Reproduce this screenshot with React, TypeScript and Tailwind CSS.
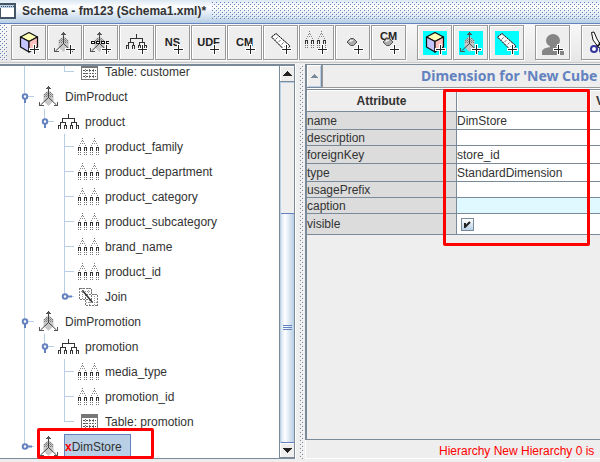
import React from "react";

type Guide = "none" | "line" | "tee" | "end" | "open" | "openLast" | "closed" | "closedLast";
type IconName = "table" | "dim" | "tree" | "level" | "join";

function DimShape() {
  return (
    <g>
      <path d="M10.5 5l5 4.5v6.5l-5 5-5-5v-6.5z" fill="#c8c8c8" />
      <path d="M8 7.5h6M6 9.5h9M6 11.5h9" stroke="#777" strokeDasharray="1 1" />
      <path d="M7 8.5h7M7 10.5h8" stroke="#999" strokeDasharray="1 1" />
      <path d="M10.5 1v12M10.5 12.5l-8 7.5M10.5 12.5l8 7.5" stroke="#444" fill="none" />
      <path d="M8 3.5h5M9 2.5h3M1.5 17v3.5h4M15.5 20.5h4v-3.5" stroke="#555" fill="none" shapeRendering="crispEdges" />
    </g>
  );
}

function TreeShape() {
  return (
    <g stroke="#333" fill="none" shapeRendering="crispEdges">
      <path d="M10.5 0v4.5M4.5 9v-4.5h12v4.5M2 8.5h6M13 8.5h6" />
      <path d="M2.5 8v3M7.5 8v3M13.5 8v3M18.5 8v3" />
      <path d="M0.5 15v-3.5h2v3.5M6.5 15v-3.5h2v3.5M12.5 15v-3.5h2v3.5M18.5 15v-3.5h2v3.5" />
    </g>
  );
}

function LevelShape() {
  return (
    <g fill="none" shapeRendering="crispEdges">
      <path d="M4.5 0v3M16.5 0v3" stroke="#777" strokeDasharray="1 1" />
      <path d="M3.5 3v1M5.5 3v1M15.5 3v1M17.5 3v1M2.5 5v1M6.5 5v1M14.5 5v1M18.5 5v1M1.5 7v1M7.5 7v1M13.5 7v1M19.5 7v1M4.5 5v1M16.5 5v1" stroke="#888" />
      <path d="M0.5 13v-3.5h2v3.5M6.5 13v-3.5h2v3.5M12.5 13v-3.5h2v3.5M18.5 13v-3.5h2v3.5" stroke="#333" />
      <path d="M0.5 14v3M2.5 14v3M6.5 14v3M8.5 14v3M12.5 14v3M14.5 14v3M18.5 14v3M20.5 14v3" stroke="#777" strokeDasharray="1 1" />
    </g>
  );
}

function TreeIcon({ name }: { name: IconName }) {
  if (name === "dim")
    return (
      <svg width="22" height="23" viewBox="0 0 22 23" className="ml-1"><DimShape /></svg>
    );
  if (name === "tree")
    return (
      <svg width="22" height="16" viewBox="0 0 22 16" className="ml-1"><TreeShape /></svg>
    );
  if (name === "level")
    return (
      <svg width="22" height="17" viewBox="0 0 22 17" className="ml-1"><LevelShape /></svg>
    );
  if (name === "table")
    return (
      <svg width="17" height="16" viewBox="0 0 17 16" className="ml-[7px]" shapeRendering="crispEdges">
        <path d="M0.5 0.5h16v15h-16z" fill="#fff" stroke="#777" />
        <path d="M0 0h17v4h-17z" fill="#777" />
        <path d="M2 6.5h13M2 9.5h13M2 12.5h13" stroke="#555" strokeDasharray="2 1" />
        <path d="M4.5 5v10M8.5 5v10M12.5 5v10" stroke="#888" strokeDasharray="1 1" />
      </svg>
    );
  return (
    <svg width="19" height="18" viewBox="0 0 19 18" className="ml-[5px]" shapeRendering="crispEdges" fill="none">
      <path d="M0.5 0.5h12v11h-12zM6.5 6.5h12v11h-12z" stroke="#777" strokeDasharray="2 1" />
      <path d="M0 3.5h13M3.5 0v12M9.5 0v6M7 14.5h12M15.5 6v12M10.5 12v6" stroke="#999" strokeDasharray="1 1" />
      <path d="M3.5 2.5l10 12" stroke="#333" strokeWidth="1.5" shapeRendering="auto" />
    </svg>
  );
}

function GuideCell({ kind }: { kind: Guide }) {
  const open = kind === "open" || kind === "openLast";
  const closed = kind === "closed" || kind === "closedLast";
  const through = kind === "line" || kind === "tee" || kind === "open" || kind === "closed";
  const half = kind === "end" || kind === "openLast" || kind === "closedLast";
  return (
    <svg width="20" height="25" viewBox="0 0 20 25" className="shrink-0">
      <g stroke="#b8cfe5" shapeRendering="crispEdges">
        {through && <path d="M10.5 0v25" />}
        {half && <path d="M10.5 0v13" />}
        {kind !== "line" && kind !== "none" && <path d="M10 12.5h10" />}
      </g>
      {open && <path d="M11 13v6" stroke="#6382bf" strokeWidth="2" />}
      {closed && <path d="M12 12.5h6" stroke="#6382bf" strokeWidth="2" />}
      {(open || closed) && <circle cx="11" cy="12.5" r="2.25" fill="#fff" stroke="#6382bf" strokeWidth="2" />}
    </svg>
  );
}

const rows: { guides: Guide[]; icon: IconName; label: string }[] = [
  { guides: ["line", "none", "end"], icon: "table", label: "Table: customer" },
  { guides: ["open"], icon: "dim", label: "DimProduct" },
  { guides: ["line", "openLast"], icon: "tree", label: "product" },
  { guides: ["line", "none", "tee"], icon: "level", label: "product_family" },
  { guides: ["line", "none", "tee"], icon: "level", label: "product_department" },
  { guides: ["line", "none", "tee"], icon: "level", label: "product_category" },
  { guides: ["line", "none", "tee"], icon: "level", label: "product_subcategory" },
  { guides: ["line", "none", "tee"], icon: "level", label: "brand_name" },
  { guides: ["line", "none", "tee"], icon: "level", label: "product_id" },
  { guides: ["line", "none", "closedLast"], icon: "join", label: "Join" },
  { guides: ["open"], icon: "dim", label: "DimPromotion" },
  { guides: ["line", "openLast"], icon: "tree", label: "promotion" },
  { guides: ["line", "none", "tee"], icon: "level", label: "media_type" },
  { guides: ["line", "none", "tee"], icon: "level", label: "promotion_id" },
  { guides: ["line", "none", "end"], icon: "table", label: "Table: promotion" },
];

function Plus() {
  return (
    <g shapeRendering="crispEdges">
      <path d="M17.5 13v11M12 18.5h11" stroke="#fff" strokeWidth="3" />
      <path d="M17.5 14v9M13 18.5h9" stroke="#222" />
    </g>
  );
}

function CubeShape() {
  return (
    <g stroke="#111" strokeWidth="1.25" strokeLinejoin="round">
      <path d="M12 1.5l8.5 4.5-8.500 4.500-8.500-4.500z" fill="#ffffb8" />
      <path d="M3.500 6l8.500 4.500v10.500l-8.500-5z" fill="#c4c4ff" />
      <path d="M20.500 6l-8.500 4.500v10.500l8.500-5z" fill="#ffc0c0" />
    </g>
  );
}

function RulerShape() {
  return (
    <g>
      <path d="M2.5 6l4.5-3.5 14 12.5-4.5 5z" fill="#fff" stroke="#888" />
      <path d="M2.5 6l4.5-3.5 14 12.5-4.5 5z" stroke="#111" strokeDasharray="2 1" />
      <path d="M6.5 8.5l2-2M9.5 11l2-2M12.5 13.5l2-2M15.5 16l2-2" stroke="#777" />
    </g>
  );
}

function Gem() {
  return (
    <g>
      <path d="M9.500 7.500h3l3.500 3.500-3.500 3.500h-3l-3.500-3.500z" fill="#aaa" stroke="#555" />
      <path d="M9 9.500h3M8.500 10.500h2" stroke="#eee" />
    </g>
  );
}

function ToolButton({ label, text, textTop, cyan, gap, children }: {
  label: string; text?: string; textTop?: boolean; cyan?: boolean; gap?: boolean; children?: React.ReactNode;
}) {
  return (
    <button
      aria-label={label}
      className={`relative flex size-[35px] shrink-0 items-center justify-center border border-[#999] bg-[#eee] shadow-[1px_1px_0_#fff,inset_1px_1px_0_#fff] ${gap ? "ml-[10px]" : ""}`}
    >
      {text && (
        <span className={`absolute inset-x-0 text-center text-[11px] leading-3 font-bold text-[#222] ${textTop ? "top-1" : "top-2.5"}`}>{text}</span>
      )}
      <svg width="24" height="24" viewBox="0 0 24 24" fill="none" className={`relative ${cyan ? "bg-[#00ffff]" : ""}`}>
        {children}
      </svg>
    </button>
  );
}

function Toolbar() {
  return (
    <div className="flex h-[39px] shrink-0 items-start gap-px border-b border-[#ccc] bg-linear-to-b from-[#f8f8f8] to-[#e6e6e6] pt-px">
      <svg width="10" height="36" className="shrink-0"><rect x="0" width="7" height="36" fill="url(#bumps)" /></svg>
      <ToolButton label="Add cube"><CubeShape /><Plus /></ToolButton>
      <ToolButton label="Add dimension"><DimShape /><Plus /></ToolButton>
      <ToolButton label="Add dimension usage">
        <DimShape />
        <path d="M2 11.5h18" stroke="#111" strokeWidth="3" strokeDasharray="4 1" />
        <path d="M3 11.5h17" stroke="#fff" strokeDasharray="2 3" />
        <Plus />
      </ToolButton>
      <ToolButton label="Add hierarchy"><g transform="translate(1 3)"><TreeShape /></g><Plus /></ToolButton>
      <ToolButton label="Add named set" text="NS"><Plus /></ToolButton>
      <ToolButton label="Add user defined function" text="UDF"><Plus /></ToolButton>
      <ToolButton label="Add calculated member" text="CM"><Plus /></ToolButton>
      <ToolButton label="Add measure"><RulerShape /><Plus /></ToolButton>
      <ToolButton label="Add level"><LevelShape /><Plus /></ToolButton>
      <ToolButton label="Add property"><Gem /><Plus /></ToolButton>
      <ToolButton label="Add calculated member property" text="CM" textTop><Gem /><Plus /></ToolButton>
      <ToolButton label="Add virtual cube" cyan gap><CubeShape /><Plus /></ToolButton>
      <ToolButton label="Add virtual cube dimension" cyan><DimShape /><Plus /></ToolButton>
      <ToolButton label="Add virtual cube measure" cyan><RulerShape /><Plus /></ToolButton>
      <ToolButton label="Add role" gap>
        <ellipse cx="12" cy="9.5" rx="7" ry="6.5" fill="#858585" />
        <path d="M9 15h6v3h-6zM1 24v-4q1-3 8-4h6q7 1 8 4v4z" fill="#858585" />
        <Plus />
      </ToolButton>
      <ToolButton label="Cut" gap>
        <path d="M4.500 1.500l2.500-0.500 3 7 5 8-3 1-6-8z" fill="#fff" stroke="#111" />
        <path d="M19 2l-7 12" stroke="#111" strokeWidth="2" />
        <path d="M9 16l3-2" stroke="#111" strokeWidth="2" />
        <circle cx="7" cy="18" r="3" fill="#fff" stroke="#34349a" strokeWidth="2" />
        <circle cx="16" cy="19" r="3" fill="#fff" stroke="#34349a" strokeWidth="2" />
      </ToolButton>
    </div>
  );
}

const attributes = [
  { name: "name", value: "DimStore", height: "h-[18px]" },
  { name: "description", value: "", height: "h-4" },
  { name: "foreignKey", value: "store_id", height: "h-[18px]" },
  { name: "type", value: "StandardDimension", height: "h-[18px]" },
  { name: "usagePrefix", value: "", height: "h-4" },
  { name: "caption", value: "", height: "h-4", tint: true },
  { name: "visible", value: "check", height: "h-[21px]" },
];

export default function App() {
  return (
    <div className="flex h-screen flex-col overflow-hidden bg-[#eee] font-['Liberation_Sans',Arial,sans-serif] text-[12px] leading-[14px] text-[#333]">
      <header className="flex h-6 shrink-0 items-center border-b border-[#6382bf] bg-linear-to-b from-[#dce8f3] via-white via-30% to-[#b8cfe5] pb-0.5">
        <svg width="16" height="16" viewBox="0 0 16 16" className="shrink-0" shapeRendering="crispEdges">
          <path d="M0 1h15v14h-15z" fill="#fff" stroke="#456" strokeWidth="2" />
          <path d="M0 2h14v3h-14z" fill="#b8cfe5" />
          <path d="M1 3.5h13" stroke="#456" strokeDasharray="1 1" />
        </svg>
        <h1 className="ml-1.5 shrink-0 font-bold whitespace-nowrap">Schema - fm123 (Schema1.xml)*</h1>
        <svg className="ml-1.5 h-[17px] min-w-0 flex-1">
          <defs>
            <pattern id="bumps" width="4" height="4" patternUnits="userSpaceOnUse">
              <path d="M0 0h1v1h-1zM2 2h1v1h-1z" fill="#6382bf" shapeRendering="crispEdges" />
              <path d="M1 1h1v1h-1zM3 3h1v1h-1z" fill="#fff" shapeRendering="crispEdges" />
            </pattern>
            <pattern id="divider" width="4" height="4" patternUnits="userSpaceOnUse">
              <path d="M0 0h1v1h-1zM2 2h1v1h-1z" fill="#7a8a99" shapeRendering="crispEdges" />
              <path d="M1 1h1v1h-1zM3 3h1v1h-1z" fill="#fff" shapeRendering="crispEdges" />
            </pattern>
          </defs>
          <rect width="100%" height="100%" fill="url(#bumps)" />
        </svg>
      </header>

      <Toolbar />

      <div className="flex min-h-0 flex-1 pt-px pb-[3px]">
        <div className="relative flex w-[295px] shrink-0 border-t-2 border-r border-b border-[#7a8a99] bg-white">
          <div className="flex min-w-0 flex-1 flex-col overflow-hidden">
            <ul className="-mt-[7px] flex flex-col">
              {rows.map((row) => (
                <li key={row.label} className="flex h-[25px] shrink-0 items-center pl-[14px]">
                  {row.guides.map((g, i) => <GuideCell key={i} kind={g} />)}
                  <span className="flex w-[31px] shrink-0 items-center"><TreeIcon name={row.icon} /></span>
                  <span className="whitespace-nowrap">{row.label}</span>
                </li>
              ))}
              <li className="flex h-[25px] shrink-0 items-center pl-[14px]">
                <GuideCell kind="closedLast" />
                <span className="flex w-[30px] shrink-0 items-center"><TreeIcon name="dim" /></span>
                <span className="flex h-[25px] w-[67px] items-center border border-[#6382bf] bg-[#b8cfe5]">
                  <b className="text-[#f00]">x</b>DimStore
                </span>
              </li>
            </ul>
          </div>
          <div className="flex w-[15px] shrink-0 flex-col border-l border-[#7a8a99] bg-[#eee]">
            <button aria-label="Scroll up" className="flex h-4 items-center justify-center border-b border-[#7a8a99] shadow-[inset_1px_1px_0_#fff]">
              <svg width="9" height="5" shapeRendering="crispEdges"><path d="M4 0h1v1h1v1h1v1h1v1h1v1h-9v-1h1v-1h1v-1h1v-1h1z" fill="#222" /></svg>
            </button>
            <div className="flex flex-1 flex-col justify-end border-t border-l border-[#b8cfe5]">
              <div className="flex h-[64%] flex-col items-center justify-center gap-px border-y border-[#6382bf] bg-linear-to-r from-[#d5e2ef] via-white via-30% to-[#b8cfe5]">
                <i className="h-px w-[9px] bg-[#6382bf]" />
                <i className="h-px w-[9px] bg-[#6382bf]" />
                <i className="h-px w-[9px] bg-[#6382bf]" />
              </div>
            </div>
            <button aria-label="Scroll down" className="flex h-[15px] items-center justify-center border-b border-[#7a8a99] shadow-[inset_1px_1px_0_#fff]">
              <svg width="9" height="5" shapeRendering="crispEdges"><path d="M0 0h9v1h-1v1h-1v1h-1v1h-1v1h-1v-1h-1v-1h-1v-1h-1v-1h-1z" fill="#222" /></svg>
            </button>
          </div>
          <div className="absolute -bottom-px left-[37px] h-[31px] w-[117px] rounded-[2px] border-3 border-[#f00]" />
        </div>

        <svg width="10" className="h-full shrink-0 border-l border-white">
          <rect x="4" y="1" width="4" height="100%" fill="url(#divider)" />
        </svg>

        <main className="flex min-w-0 flex-1 flex-col">
          <section className="flex min-h-0 flex-1 flex-col overflow-hidden border-t border-b border-l-2 border-[#7a8a99]">
            <div className="flex h-6 shrink-0 border-b border-white">
              <button aria-label="Collapse" className="flex w-[15px] shrink-0 items-center justify-center border-r border-b border-[#7a8a99] bg-[#eee] shadow-[inset_1px_1px_0_#fff,inset_-1px_-1px_0_#b8cfe5]">
                <svg width="7" height="4" shapeRendering="crispEdges"><path d="M3 0h1v1h1v1h1v1h1v1h-7v-1h1v-1h1v-1h1z" fill="#7a8a99" /></svg>
              </button>
              <h2 className="flex flex-1 items-center border-b border-l border-[#999] pl-[98px] font-['Noto_Sans',sans-serif] text-[14px] leading-4 font-bold whitespace-nowrap text-[#6382bf]">Dimension for 'New Cube</h2>
            </div>
            <div className="relative">
              <table className="w-full table-fixed border-separate border-spacing-0 border-t border-[#7a8a99]">
                <colgroup>
                  <col className="w-[150px]" />
                  <col className="w-[133px]" />
                  <col />
                </colgroup>
                <thead>
                  <tr className="h-[22px]">
                    <th className="border-r border-b border-[#7a8a99] p-0 shadow-[inset_1px_1px_0_#fff]">Attribute</th>
                    <td className="border-r border-b border-[#7a8a99] p-0 shadow-[inset_1px_1px_0_#fff]" />
                    <th className="overflow-hidden border-b border-[#7a8a99] p-0 pl-1.5 text-left shadow-[inset_1px_1px_0_#fff]">V</th>
                  </tr>
                </thead>
                <tbody>
                  {attributes.map((a) => (
                    <tr key={a.name} className={`${a.height} ${a.tint ? "bg-[#e0f8ff]" : "bg-white"}`}>
                      <th scope="row" className="border-r border-b border-[#7a8a99] bg-[#dcdcdc] p-0 text-left font-normal">{a.name}</th>
                      <td className="border-r border-b border-[#7a8a99] p-0">
                        {a.value === "check" ? (
                          <label className="relative ml-1 flex size-[13px]">
                            <input
                              type="checkbox"
                              defaultChecked
                              aria-label="visible"
                              className="size-[13px] appearance-none border border-[#7a8a99] bg-linear-to-b from-white to-[#b8cfe5]"
                            />
                            <svg width="7" height="7" viewBox="0 0 7 7" className="absolute top-[3px] left-[3px]"><path d="M1 2v4l5-5" fill="none" stroke="#222" strokeWidth="2" /></svg>
                          </label>
                        ) : a.value}
                      </td>
                      <td className="border-b border-[#7a8a99] p-0" />
                    </tr>
                  ))}
                </tbody>
              </table>
              <div className="absolute top-0 left-[136px] h-[157px] w-[147px] rounded-[2px] border-3 border-[#f00]" />
            </div>
          </section>
          <p className="flex h-[19px] shrink-0 items-center overflow-hidden border-b border-l border-white pt-1 pl-[133px] whitespace-nowrap text-[#f00]">Hierarchy New Hierarchy 0 is</p>
        </main>
      </div>
    </div>
  );
}
